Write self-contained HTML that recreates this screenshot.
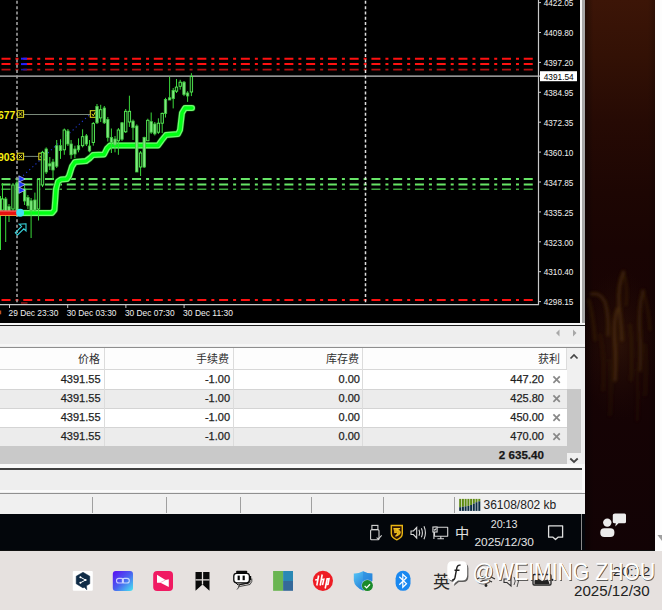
<!DOCTYPE html>
<html lang="zh-CN"><head><meta charset="utf-8">
<style>
*{margin:0;padding:0;box-sizing:border-box}
html,body{width:662px;height:610px;overflow:hidden;background:#e6e1df;font-family:"Liberation Sans",sans-serif}
.a{position:absolute}
#chart{left:0;top:0;width:580px;height:323px;background:#000}
#wall{left:585px;top:0;width:70px;height:551px;background:linear-gradient(#2e1007 0%,#260b06 40%,#1a0605 70%,#120305 100%)}
#rstrip{left:655px;top:0;width:7px;height:551px;background:#fdfdfd}
#panel{left:0;top:323px;width:585px;height:191px;background:#eeeeee}
.hd{position:absolute;top:349px;height:21px;font-size:11px;line-height:21px;color:#303030;text-align:right}
.tx{position:absolute;font-size:11px;line-height:19px;color:#1e1e1e;-webkit-text-stroke:0.25px #1e1e1e;text-align:right;white-space:nowrap}
.x{position:absolute;left:551px;width:11px;font-size:13px;line-height:19px;color:#8a8a8a;text-align:center}
#tbar{left:0;top:514px;width:585px;height:37px;background:#03060b}
#bottom{left:0;top:551px;width:662px;height:59px;background:#e6e1df}
.sep{position:absolute;width:1px;background:#a0a0a0}
</style></head><body>
<div id="chart" class="a">
<svg width="580" height="323" style="position:absolute;left:0;top:0" font-family="Liberation Sans, sans-serif">
<g stroke-dasharray="9 5 3 4.76" fill="none">
<line x1="1.5" y1="58.7" x2="534" y2="58.7" stroke="#ff1010" stroke-width="2"/>
<line x1="1.5" y1="64.1" x2="534" y2="64.1" stroke="#ff1010" stroke-width="2"/>
<line x1="1.5" y1="69.6" x2="534" y2="69.6" stroke="#b01010" stroke-width="1.6"/>
<line x1="1.5" y1="179.1" x2="534" y2="179.1" stroke="#66e466" stroke-width="2"/>
<line x1="1.5" y1="184.6" x2="534" y2="184.6" stroke="#66e466" stroke-width="2"/>
<line x1="1.5" y1="189.3" x2="534" y2="189.3" stroke="#40a840" stroke-width="1.5"/>
<line x1="1.5" y1="300" x2="534" y2="300" stroke="#ff1010" stroke-width="2"/>
</g>
<rect x="21" y="57.7" width="6" height="2" fill="#2020ff"/>
<rect x="21" y="63.1" width="6" height="2" fill="#2020ff"/>
<rect x="21" y="68.8" width="6" height="1.6" fill="#1a1aa0"/>
<line x1="0" y1="76.2" x2="538" y2="76.2" stroke="#c4c4c4" stroke-width="1.2"/>
<g stroke-dasharray="3 2.33" fill="none">
<line x1="17" y1="0.8" x2="17" y2="304" stroke="#a0a0a0" stroke-width="1.6"/>
<line x1="365.5" y1="0.8" x2="365.5" y2="304" stroke="#e0e0e0" stroke-width="1.5"/>
</g>
<!-- yellow labels -->
<line x1="24" y1="114.5" x2="90" y2="114.5" stroke="#7a8a7a" stroke-width="1"/>
<line x1="24" y1="156.4" x2="38.5" y2="156.4" stroke="#7a8a7a" stroke-width="1"/>
<text x="-2" y="118.6" font-size="10.4" font-weight="bold" fill="#f8f010">677</text>
<text x="-2" y="160.6" font-size="10.4" font-weight="bold" fill="#f8f010">903</text>
<g fill="none" stroke="#e8e020" stroke-width="1">
<rect x="17.3" y="110.7" width="6.3" height="6.6"/>
<rect x="17.3" y="153.2" width="6.3" height="6.6"/>
<rect x="90.3" y="110.7" width="6.3" height="6.6"/>
<rect x="38.8" y="153.2" width="6.3" height="6.6"/>
<path d="M18.8 112.2 L22.1 115.8 M22.1 112.2 L18.8 115.8"/>
<path d="M18.8 154.7 L22.1 158.3 M22.1 154.7 L18.8 158.3"/>
<path d="M91.8 113.8 L93.3 115.8 L95.4 112"/>
<path d="M40.3 156.3 L41.8 158.3 L43.9 154.5"/>
</g>
<path d="M20 178.5 L91 113.5" stroke="#2038d0" stroke-width="1.1" stroke-dasharray="1.2 3" fill="none"/>
<!-- supertrend -->
<path d="M20,213 L52,213 L54.5,210 L56,189 L58,181.5 L61,179.5 L67,179 L69,176 L72,166.5 L75,162 L86,161 L90,158 L93,155 L104,154.5 L107,148.5 L110,145.5 L158,145.5 L162,140 L166,135 L178,134 L180,130 L182,113 L185,108 L192,108" fill="none" stroke="#0c6a0c" stroke-width="7.2" stroke-linejoin="round" stroke-linecap="round" opacity="0.8"/>
<path d="M20,213 L52,213 L54.5,210 L56,189 L58,181.5 L61,179.5 L67,179 L69,176 L72,166.5 L75,162 L86,161 L90,158 L93,155 L104,154.5 L107,148.5 L110,145.5 L158,145.5 L162,140 L166,135 L178,134 L180,130 L182,113 L185,108 L192,108" fill="none" stroke="#72f872" stroke-width="6" stroke-linejoin="round" stroke-linecap="round"/>
<path d="M20,213 L52,213 L54.5,210 L56,189 L58,181.5 L61,179.5 L67,179 L69,176 L72,166.5 L75,162 L86,161 L90,158 L93,155 L104,154.5 L107,148.5 L110,145.5 L158,145.5 L162,140 L166,135 L178,134 L180,130 L182,113 L185,108 L192,108" fill="none" stroke="#00ff14" stroke-width="3.4" stroke-linejoin="round" stroke-linecap="round"/>
<line x1="0.5" y1="196" x2="0.5" y2="250" stroke="#3ad83a" stroke-width="1"/>
<rect x="-0.7" y="199" width="2.4" height="13" fill="#80e880" stroke="#40c840" stroke-width="0.8"/>
<line x1="2.5" y1="183" x2="2.5" y2="212" stroke="#3ad83a" stroke-width="1"/>
<rect x="1.3" y="199" width="2.4" height="11" fill="#041a04" stroke="#58f058" stroke-width="0.9"/>
<line x1="5.7" y1="197" x2="5.7" y2="242" stroke="#3ad83a" stroke-width="1"/>
<rect x="4.5" y="199" width="2.4" height="13" fill="#80e880" stroke="#40c840" stroke-width="0.8"/>
<line x1="9" y1="204" x2="9" y2="222" stroke="#3ad83a" stroke-width="1"/>
<rect x="7.8" y="206.6" width="2.4" height="5.400000000000006" fill="#80e880" stroke="#40c840" stroke-width="0.8"/>
<line x1="13" y1="183" x2="13" y2="211" stroke="#3ad83a" stroke-width="1"/>
<rect x="11.8" y="185" width="2.4" height="24" fill="#041a04" stroke="#58f058" stroke-width="0.9"/>
<line x1="17" y1="180" x2="17" y2="215" stroke="#3ad83a" stroke-width="1"/>
<rect x="15.8" y="183" width="2.4" height="29" fill="#80e880" stroke="#40c840" stroke-width="0.8"/>
<line x1="24.6" y1="186" x2="24.6" y2="205" stroke="#3ad83a" stroke-width="1"/>
<rect x="23.400000000000002" y="189" width="2.4" height="12" fill="#80e880" stroke="#40c840" stroke-width="0.8"/>
<line x1="27.9" y1="195" x2="27.9" y2="209" stroke="#3ad83a" stroke-width="1"/>
<rect x="26.7" y="197.5" width="2.4" height="8.199999999999989" fill="#80e880" stroke="#40c840" stroke-width="0.8"/>
<line x1="31.1" y1="198" x2="31.1" y2="238" stroke="#3ad83a" stroke-width="1"/>
<rect x="29.900000000000002" y="200.8" width="2.4" height="9.5" fill="#80e880" stroke="#40c840" stroke-width="0.8"/>
<line x1="34.9" y1="192.6" x2="34.9" y2="212" stroke="#3ad83a" stroke-width="1"/>
<rect x="33.699999999999996" y="200" width="2.4" height="10" fill="#80e880" stroke="#40c840" stroke-width="0.8"/>
<line x1="38.5" y1="178" x2="38.5" y2="220.5" stroke="#3ad83a" stroke-width="1"/>
<rect x="37.3" y="179.5" width="2.4" height="29.5" fill="#041a04" stroke="#58f058" stroke-width="0.9"/>
<line x1="42.5" y1="150.8" x2="42.5" y2="187" stroke="#3ad83a" stroke-width="1"/>
<rect x="41.3" y="152.3" width="2.4" height="32.69999999999999" fill="#041a04" stroke="#58f058" stroke-width="0.9"/>
<line x1="46.2" y1="147.4" x2="46.2" y2="174" stroke="#3ad83a" stroke-width="1"/>
<rect x="45.0" y="149" width="2.4" height="23" fill="#80e880" stroke="#40c840" stroke-width="0.8"/>
<line x1="49.8" y1="157" x2="49.8" y2="170" stroke="#3ad83a" stroke-width="1"/>
<rect x="48.599999999999994" y="163.8" width="2.4" height="2.1999999999999886" fill="#80e880" stroke="#40c840" stroke-width="0.8"/>
<line x1="53" y1="158.9" x2="53" y2="180" stroke="#3ad83a" stroke-width="1"/>
<rect x="51.8" y="162" width="2.4" height="8" fill="#80e880" stroke="#40c840" stroke-width="0.8"/>
<line x1="56.7" y1="140" x2="56.7" y2="168" stroke="#3ad83a" stroke-width="1"/>
<rect x="55.5" y="145.7" width="2.4" height="20.5" fill="#80e880" stroke="#40c840" stroke-width="0.8"/>
<line x1="60.5" y1="139.2" x2="60.5" y2="158.9" stroke="#3ad83a" stroke-width="1"/>
<rect x="59.3" y="145.7" width="2.4" height="4.900000000000006" fill="#80e880" stroke="#40c840" stroke-width="0.8"/>
<line x1="64.3" y1="128.5" x2="64.3" y2="154.8" stroke="#3ad83a" stroke-width="1"/>
<rect x="63.099999999999994" y="130" width="2.4" height="19.80000000000001" fill="#041a04" stroke="#58f058" stroke-width="0.9"/>
<line x1="67.9" y1="129" x2="67.9" y2="146" stroke="#3ad83a" stroke-width="1"/>
<rect x="66.7" y="131" width="2.4" height="13" fill="#80e880" stroke="#40c840" stroke-width="0.8"/>
<line x1="71.1" y1="140" x2="71.1" y2="158.9" stroke="#3ad83a" stroke-width="1"/>
<rect x="69.89999999999999" y="144" width="2.4" height="10.800000000000011" fill="#80e880" stroke="#40c840" stroke-width="0.8"/>
<line x1="74.9" y1="145.7" x2="74.9" y2="158" stroke="#3ad83a" stroke-width="1"/>
<rect x="73.7" y="149" width="2.4" height="5" fill="#80e880" stroke="#40c840" stroke-width="0.8"/>
<line x1="78.5" y1="138.4" x2="78.5" y2="152.3" stroke="#3ad83a" stroke-width="1"/>
<rect x="77.3" y="145.7" width="2.4" height="4.100000000000023" fill="#80e880" stroke="#40c840" stroke-width="0.8"/>
<line x1="82.6" y1="129.3" x2="82.6" y2="147.4" stroke="#3ad83a" stroke-width="1"/>
<rect x="81.39999999999999" y="136.7" width="2.4" height="9.0" fill="#041a04" stroke="#58f058" stroke-width="0.9"/>
<line x1="86.4" y1="134" x2="86.4" y2="146" stroke="#3ad83a" stroke-width="1"/>
<rect x="85.2" y="135.9" width="2.4" height="8.099999999999994" fill="#80e880" stroke="#40c840" stroke-width="0.8"/>
<line x1="89.5" y1="140" x2="89.5" y2="152.3" stroke="#3ad83a" stroke-width="1"/>
<rect x="88.3" y="146" width="2.4" height="5" fill="#80e880" stroke="#40c840" stroke-width="0.8"/>
<line x1="93.3" y1="122" x2="93.3" y2="145.7" stroke="#3ad83a" stroke-width="1"/>
<rect x="92.1" y="123.6" width="2.4" height="18.900000000000006" fill="#041a04" stroke="#58f058" stroke-width="0.9"/>
<line x1="97" y1="104" x2="97" y2="124" stroke="#3ad83a" stroke-width="1"/>
<rect x="95.8" y="106.4" width="2.4" height="16.39999999999999" fill="#80e880" stroke="#40c840" stroke-width="0.8"/>
<line x1="100.7" y1="104.8" x2="100.7" y2="122" stroke="#3ad83a" stroke-width="1"/>
<rect x="99.5" y="109.7" width="2.4" height="8.200000000000003" fill="#041a04" stroke="#58f058" stroke-width="0.9"/>
<line x1="104.3" y1="106" x2="104.3" y2="124" stroke="#3ad83a" stroke-width="1"/>
<rect x="103.1" y="108" width="2.4" height="14.799999999999997" fill="#80e880" stroke="#40c840" stroke-width="0.8"/>
<line x1="107.8" y1="117" x2="107.8" y2="141.6" stroke="#3ad83a" stroke-width="1"/>
<rect x="106.6" y="119.5" width="2.4" height="18.0" fill="#80e880" stroke="#40c840" stroke-width="0.8"/>
<line x1="111.4" y1="128.5" x2="111.4" y2="153" stroke="#3ad83a" stroke-width="1"/>
<rect x="110.2" y="137.5" width="2.4" height="5.0" fill="#80e880" stroke="#40c840" stroke-width="0.8"/>
<line x1="115" y1="136" x2="115" y2="152.3" stroke="#3ad83a" stroke-width="1"/>
<rect x="113.8" y="139" width="2.4" height="6" fill="#80e880" stroke="#40c840" stroke-width="0.8"/>
<line x1="118.4" y1="128" x2="118.4" y2="154.8" stroke="#3ad83a" stroke-width="1"/>
<rect x="117.2" y="130" width="2.4" height="10.800000000000011" fill="#041a04" stroke="#58f058" stroke-width="0.9"/>
<line x1="122" y1="122" x2="122" y2="141" stroke="#3ad83a" stroke-width="1"/>
<rect x="120.8" y="122.8" width="2.4" height="16.39999999999999" fill="#80e880" stroke="#40c840" stroke-width="0.8"/>
<line x1="125.7" y1="109" x2="125.7" y2="133" stroke="#3ad83a" stroke-width="1"/>
<rect x="124.5" y="111.3" width="2.4" height="20.500000000000014" fill="#041a04" stroke="#58f058" stroke-width="0.9"/>
<line x1="129.4" y1="95.7" x2="129.4" y2="126.9" stroke="#3ad83a" stroke-width="1"/>
<rect x="128.20000000000002" y="111.3" width="2.4" height="10.700000000000003" fill="#041a04" stroke="#58f058" stroke-width="0.9"/>
<line x1="133" y1="119.5" x2="133" y2="140" stroke="#3ad83a" stroke-width="1"/>
<rect x="131.8" y="121.1" width="2.4" height="6.6000000000000085" fill="#80e880" stroke="#40c840" stroke-width="0.8"/>
<line x1="136.8" y1="124.4" x2="136.8" y2="172" stroke="#3ad83a" stroke-width="1"/>
<rect x="135.60000000000002" y="126" width="2.4" height="46" fill="#80e880" stroke="#40c840" stroke-width="0.8"/>
<line x1="140.6" y1="151" x2="140.6" y2="176" stroke="#3ad83a" stroke-width="1"/>
<rect x="139.4" y="153" width="2.4" height="14" fill="#041a04" stroke="#58f058" stroke-width="0.9"/>
<line x1="144.2" y1="136.7" x2="144.2" y2="168" stroke="#3ad83a" stroke-width="1"/>
<rect x="143.0" y="137.5" width="2.4" height="29.5" fill="#80e880" stroke="#40c840" stroke-width="0.8"/>
<line x1="147.8" y1="118.7" x2="147.8" y2="141" stroke="#3ad83a" stroke-width="1"/>
<rect x="146.60000000000002" y="120.3" width="2.4" height="20.500000000000014" fill="#041a04" stroke="#58f058" stroke-width="0.9"/>
<line x1="151.2" y1="112.5" x2="151.2" y2="133.9" stroke="#3ad83a" stroke-width="1"/>
<rect x="150.0" y="121.6" width="2.4" height="10.599999999999994" fill="#80e880" stroke="#40c840" stroke-width="0.8"/>
<line x1="154.8" y1="122" x2="154.8" y2="135.5" stroke="#3ad83a" stroke-width="1"/>
<rect x="153.60000000000002" y="124" width="2.4" height="9.900000000000006" fill="#80e880" stroke="#40c840" stroke-width="0.8"/>
<line x1="158.4" y1="118.3" x2="158.4" y2="133.9" stroke="#3ad83a" stroke-width="1"/>
<rect x="157.20000000000002" y="123.2" width="2.4" height="8.999999999999986" fill="#041a04" stroke="#58f058" stroke-width="0.9"/>
<line x1="162.2" y1="112.5" x2="162.2" y2="133" stroke="#3ad83a" stroke-width="1"/>
<rect x="161.0" y="113.4" width="2.4" height="9.799999999999997" fill="#041a04" stroke="#58f058" stroke-width="0.9"/>
<line x1="165.5" y1="97.8" x2="165.5" y2="117.5" stroke="#3ad83a" stroke-width="1"/>
<rect x="164.3" y="99.4" width="2.4" height="14.0" fill="#80e880" stroke="#40c840" stroke-width="0.8"/>
<line x1="169.6" y1="76.5" x2="169.6" y2="100" stroke="#3ad83a" stroke-width="1"/>
<rect x="168.4" y="97.8" width="2.4" height="2.200000000000003" fill="#80e880" stroke="#40c840" stroke-width="0.8"/>
<line x1="173.2" y1="88" x2="173.2" y2="108.4" stroke="#3ad83a" stroke-width="1"/>
<rect x="172.0" y="90.4" width="2.4" height="8.199999999999989" fill="#80e880" stroke="#40c840" stroke-width="0.8"/>
<line x1="176.5" y1="79" x2="176.5" y2="93" stroke="#3ad83a" stroke-width="1"/>
<rect x="175.3" y="87.1" width="2.4" height="4.1000000000000085" fill="#041a04" stroke="#58f058" stroke-width="0.9"/>
<line x1="180.2" y1="79.8" x2="180.2" y2="89.6" stroke="#3ad83a" stroke-width="1"/>
<rect x="179.0" y="82.2" width="2.4" height="4.099999999999994" fill="#041a04" stroke="#58f058" stroke-width="0.9"/>
<line x1="184" y1="81" x2="184" y2="96.1" stroke="#3ad83a" stroke-width="1"/>
<rect x="182.8" y="82.2" width="2.4" height="12.299999999999997" fill="#80e880" stroke="#40c840" stroke-width="0.8"/>
<line x1="187.6" y1="91.2" x2="187.6" y2="101.9" stroke="#3ad83a" stroke-width="1"/>
<rect x="186.4" y="93" width="2.4" height="3" fill="#80e880" stroke="#40c840" stroke-width="0.8"/>
<line x1="191.4" y1="73.2" x2="191.4" y2="96.1" stroke="#3ad83a" stroke-width="1"/>
<rect x="190.20000000000002" y="76.5" width="2.4" height="15.5" fill="#041a04" stroke="#58f058" stroke-width="0.9"/>

<rect x="0" y="210.5" width="18" height="5.5" fill="#e81010"/>
<line x1="0" y1="211" x2="18" y2="211" stroke="#ff9090" stroke-width="0.8"/>
<line x1="0" y1="215.5" x2="18" y2="215.5" stroke="#ffb040" stroke-width="0.8"/>
<circle cx="20.1" cy="212.7" r="4" fill="#40e0f0"/>
<!-- blue arrows -->
<g fill="#1830ff" stroke="#e8ecff" stroke-width="0.6" stroke-linejoin="round">
<path d="M18.8 175.8 L25.2 179 L18.8 182.2 Z"/>
<path d="M18.8 181.4 L25.2 184.6 L18.8 187.8 Z"/>
<path d="M18.8 187 L25.2 190.2 L18.8 193.4 Z"/>
</g>
<path d="M26 223.8 L26 231 L23.8 228.8 L17.5 235 L15.3 232.8 L21.6 226.5 L19.2 224.2 Z" fill="none" stroke="#38d4dc" stroke-width="1.1" stroke-linejoin="miter"/>
<!-- axes -->
<rect x="0" y="310.5" width="1.2" height="3.8" fill="#c05020"/>
<rect x="21" y="302.3" width="6.5" height="1.3" fill="#a01818"/>
<line x1="538.5" y1="0" x2="538.5" y2="305" stroke="#c8c8c8" stroke-width="1.2"/>
<line x1="0" y1="304.7" x2="539" y2="304.7" stroke="#c8c8c8" stroke-width="1.3"/>
<line x1="538" y1="2.6" x2="541" y2="2.6" stroke="#c8c8c8" stroke-width="1"/>
<text x="543.7" y="6.3" font-size="8.8" textLength="29.7" lengthAdjust="spacingAndGlyphs" fill="#f0f0f0">4422.05</text>
<line x1="538" y1="32.5" x2="541" y2="32.5" stroke="#c8c8c8" stroke-width="1"/>
<text x="543.7" y="36.2" font-size="8.8" textLength="29.7" lengthAdjust="spacingAndGlyphs" fill="#f0f0f0">4409.80</text>
<line x1="538" y1="62.4" x2="541" y2="62.4" stroke="#c8c8c8" stroke-width="1"/>
<text x="543.7" y="66.1" font-size="8.8" textLength="29.7" lengthAdjust="spacingAndGlyphs" fill="#f0f0f0">4397.20</text>
<line x1="538" y1="92.3" x2="541" y2="92.3" stroke="#c8c8c8" stroke-width="1"/>
<text x="543.7" y="96.0" font-size="8.8" textLength="29.7" lengthAdjust="spacingAndGlyphs" fill="#f0f0f0">4384.95</text>
<line x1="538" y1="122.2" x2="541" y2="122.2" stroke="#c8c8c8" stroke-width="1"/>
<text x="543.7" y="125.9" font-size="8.8" textLength="29.7" lengthAdjust="spacingAndGlyphs" fill="#f0f0f0">4372.35</text>
<line x1="538" y1="152.1" x2="541" y2="152.1" stroke="#c8c8c8" stroke-width="1"/>
<text x="543.7" y="155.8" font-size="8.8" textLength="29.7" lengthAdjust="spacingAndGlyphs" fill="#f0f0f0">4360.10</text>
<line x1="538" y1="182.0" x2="541" y2="182.0" stroke="#c8c8c8" stroke-width="1"/>
<text x="543.7" y="185.7" font-size="8.8" textLength="29.7" lengthAdjust="spacingAndGlyphs" fill="#f0f0f0">4347.85</text>
<line x1="538" y1="211.9" x2="541" y2="211.9" stroke="#c8c8c8" stroke-width="1"/>
<text x="543.7" y="215.6" font-size="8.8" textLength="29.7" lengthAdjust="spacingAndGlyphs" fill="#f0f0f0">4335.25</text>
<line x1="538" y1="241.8" x2="541" y2="241.8" stroke="#c8c8c8" stroke-width="1"/>
<text x="543.7" y="245.5" font-size="8.8" textLength="29.7" lengthAdjust="spacingAndGlyphs" fill="#f0f0f0">4323.00</text>
<line x1="538" y1="271.7" x2="541" y2="271.7" stroke="#c8c8c8" stroke-width="1"/>
<text x="543.7" y="275.4" font-size="8.8" textLength="29.7" lengthAdjust="spacingAndGlyphs" fill="#f0f0f0">4310.40</text>
<line x1="538" y1="301.6" x2="541" y2="301.6" stroke="#c8c8c8" stroke-width="1"/>
<text x="543.7" y="305.3" font-size="8.8" textLength="29.7" lengthAdjust="spacingAndGlyphs" fill="#f0f0f0">4298.15</text>
<line x1="9.5" y1="305" x2="9.5" y2="308" stroke="#c8c8c8" stroke-width="1"/>
<text x="8.5" y="316.2" font-size="8.8" textLength="49.8" lengthAdjust="spacingAndGlyphs" fill="#f0f0f0">29 Dec 23:30</text>
<line x1="67.7" y1="305" x2="67.7" y2="308" stroke="#c8c8c8" stroke-width="1"/>
<text x="66.7" y="316.2" font-size="8.8" textLength="49.8" lengthAdjust="spacingAndGlyphs" fill="#f0f0f0">30 Dec 03:30</text>
<line x1="125.9" y1="305" x2="125.9" y2="308" stroke="#c8c8c8" stroke-width="1"/>
<text x="124.9" y="316.2" font-size="8.8" textLength="49.8" lengthAdjust="spacingAndGlyphs" fill="#f0f0f0">30 Dec 07:30</text>
<line x1="184.1" y1="305" x2="184.1" y2="308" stroke="#c8c8c8" stroke-width="1"/>
<text x="183.1" y="316.2" font-size="8.8" textLength="49.8" lengthAdjust="spacingAndGlyphs" fill="#f0f0f0">30 Dec 11:30</text>
<rect x="540" y="71.2" width="37" height="10" fill="#ffffff"/>
<line x1="538" y1="76.2" x2="540" y2="76.2" stroke="#c4c4c4" stroke-width="1.2"/>
<text x="543.7" y="79.6" font-size="8.8" textLength="30" lengthAdjust="spacingAndGlyphs" fill="#000">4391.54</text>
</svg>
</div>
<div id="wall" class="a"></div>
<svg class="a" style="left:585px;top:0" width="70" height="551">
<defs>
<filter id="bl" x="-50%" y="-50%" width="200%" height="200%"><feGaussianBlur stdDeviation="2.5"/></filter>
<filter id="bl2" x="-50%" y="-50%" width="200%" height="200%"><feGaussianBlur stdDeviation="1.8"/></filter>
<linearGradient id="wg" x1="0" y1="0" x2="0" y2="1">
<stop offset="0" stop-color="#3c1507"/><stop offset="0.1" stop-color="#331105"/><stop offset="0.22" stop-color="#260a04"/><stop offset="0.35" stop-color="#1d0603"/><stop offset="0.45" stop-color="#190403"/><stop offset="0.7" stop-color="#160304"/><stop offset="1" stop-color="#120305"/>
</linearGradient>
<linearGradient id="wl" x1="0" y1="0" x2="1" y2="0"><stop offset="0" stop-color="#000" stop-opacity="0.35"/><stop offset="0.12" stop-color="#000" stop-opacity="0"/><stop offset="0.9" stop-color="#000" stop-opacity="0"/><stop offset="1" stop-color="#000" stop-opacity="0.2"/></linearGradient>
<radialGradient id="wh" cx="0.5" cy="0.5" r="0.5"><stop offset="0" stop-color="#5a3210" stop-opacity="0.55"/><stop offset="1" stop-color="#3a1a08" stop-opacity="0"/></radialGradient>
</defs>
<rect width="70" height="551" fill="url(#wg)"/><rect width="70" height="551" fill="url(#wl)"/>
<ellipse cx="35" cy="345" rx="42" ry="75" fill="url(#wh)" opacity="0.5"/>
<g filter="url(#bl2)" fill="none" stroke-linecap="round" opacity="0.7">
<path d="M38.5 272 Q33 285 34 304 Q36 320 37 340" stroke="#5a3a0e" stroke-width="3.5" opacity="0.75"/>
<path d="M38.5 273 Q43 285 41 305" stroke="#4a2e0a" stroke-width="2.5" opacity="0.6"/>
<path d="M58 291 Q53 310 55 335 Q56 350 55 370" stroke="#50330c" stroke-width="3.5" opacity="0.7"/>
<path d="M58.5 292 Q64 310 65 330" stroke="#4a2e0a" stroke-width="2.2" opacity="0.55"/>
<path d="M6.5 294 Q15 292 20 302 Q24 315 23 335" stroke="#5a3a0e" stroke-width="3" opacity="0.7"/>
<path d="M4 300 Q8 315 10 340" stroke="#4a2e0a" stroke-width="3" opacity="0.55"/>
<path d="M32.5 309 Q28 320 30 345 Q31 360 30 380" stroke="#6a4510" stroke-width="3.5" opacity="0.6"/>
<path d="M45 325 Q48 345 46 380" stroke="#3e250a" stroke-width="3" opacity="0.55"/>
<path d="M15 335 Q20 355 18 390" stroke="#3e250a" stroke-width="3" opacity="0.5"/>
<path d="M60 345 Q62 365 60 395" stroke="#3a2208" stroke-width="3" opacity="0.45"/>
<path d="M25 360 Q27 385 25 415" stroke="#3a2208" stroke-width="3" opacity="0.4"/>
<path d="M52 370 Q54 395 52 420" stroke="#3a2208" stroke-width="3" opacity="0.35"/>
</g>
<g fill="#ececec">
<circle cx="22.3" cy="522.6" r="4.2"/>
<rect x="15.3" y="528.3" width="14.1" height="8.8" rx="4"/>
<path d="M30 513.5 L39.5 513.5 Q41 513.5 41 515 L41 521.8 Q41 523.3 39.5 523.3 L33.5 523.3 L30.3 526.6 L30.8 523.3 Q27.8 523.3 27.8 521.8 L27.8 515 Q27.8 513.5 30 513.5 Z"/>
</g>
</svg>
<div id="rstrip" class="a"></div>
<div class="a" style="left:580px;top:0;width:2px;height:325px;background:#f4f4f4"></div>
<div class="a" style="left:582px;top:0;width:3px;height:325px;background:#a8a8a8"></div>
<div id="panel" class="a"></div>
<div class="a" style="left:0;top:323px;width:585px;height:2px;background:#f8f8f8"></div>
<div class="a" style="left:0;top:325px;width:585px;height:1px;background:#202020"></div>
<div class="a" style="left:0;top:344px;width:585px;height:2px;background:#f6f6f6"></div>
<div class="a" style="left:0;top:346.6px;width:585px;height:1.4px;background:#8e8e8e"></div>
<!-- scroll arrows h -->
<svg class="a" style="left:553px;top:328px" width="28" height="10"><path d="M6.5 1.5 L3 5 L6.5 8.5Z" fill="#a8a8a8"/><path d="M20 1.5 L23.5 5 L20 8.5Z" fill="#a8a8a8"/></svg>
<!-- table -->
<div class="a" style="left:0;top:348px;width:567px;height:21px;background:#fdfdfd"></div>
<div class="a" style="left:0;top:369px;width:567px;height:1px;background:#d8d8d8"></div>
<div class="a" style="left:0;top:370px;width:567px;height:19px;background:#ffffff"></div>
<div class="a" style="left:0;top:389px;width:567px;height:19px;background:#ececec"></div>
<div class="a" style="left:0;top:408px;width:567px;height:19px;background:#ffffff"></div>
<div class="a" style="left:0;top:427px;width:567px;height:19px;background:#ececec"></div>
<div class="a" style="left:0;top:389px;width:567px;height:1px;background:#d4d4d4"></div>
<div class="a" style="left:0;top:408px;width:567px;height:1px;background:#d4d4d4"></div>
<div class="a" style="left:0;top:427px;width:567px;height:1px;background:#d4d4d4"></div>
<div class="a" style="left:0;top:446px;width:567px;height:18px;background:#c9c9c9"></div>
<div class="a" style="left:104px;top:348px;width:1px;height:98px;background:#dcdcdc"></div>
<div class="a" style="left:233px;top:348px;width:1px;height:98px;background:#dcdcdc"></div>
<div class="a" style="left:362px;top:348px;width:1px;height:98px;background:#dcdcdc"></div>
<div class="a" style="left:566px;top:348px;width:1px;height:21px;background:#dcdcdc"></div>
<div class="hd" style="left:40px;width:60px">价格</div>
<div class="hd" style="left:160px;width:69px">手续费</div>
<div class="hd" style="left:290px;width:69px">库存费</div>
<div class="hd" style="left:500px;width:60px">获利</div>
<div class="tx" style="left:20px;width:80.5px;top:370px">4391.55</div>
<div class="tx" style="left:20px;width:80.5px;top:389px">4391.55</div>
<div class="tx" style="left:20px;width:80.5px;top:408px">4391.55</div>
<div class="tx" style="left:20px;width:80.5px;top:427px">4391.55</div>
<div class="tx" style="left:160px;width:70px;top:370px">-1.00</div>
<div class="tx" style="left:160px;width:70px;top:389px">-1.00</div>
<div class="tx" style="left:160px;width:70px;top:408px">-1.00</div>
<div class="tx" style="left:160px;width:70px;top:427px">-1.00</div>
<div class="tx" style="left:290px;width:70px;top:370px">0.00</div>
<div class="tx" style="left:290px;width:70px;top:389px">0.00</div>
<div class="tx" style="left:290px;width:70px;top:408px">0.00</div>
<div class="tx" style="left:290px;width:70px;top:427px">0.00</div>
<div class="tx" style="left:480px;width:64px;top:370px">447.20</div>
<div class="tx" style="left:480px;width:64px;top:389px">425.80</div>
<div class="tx" style="left:480px;width:64px;top:408px">450.00</div>
<div class="tx" style="left:480px;width:64px;top:427px">470.00</div>
<div class="tx" style="left:470px;width:74px;top:446px;line-height:18px;font-weight:bold;font-size:11.6px;color:#151515">2 635.40</div>
<svg class="a" style="left:551px;top:374px" width="12" height="12"><path d="M2.4 2.4 L8.8 8.8 M8.8 2.4 L2.4 8.8" stroke="#888888" stroke-width="1.7"/></svg>
<svg class="a" style="left:551px;top:393px" width="12" height="12"><path d="M2.4 2.4 L8.8 8.8 M8.8 2.4 L2.4 8.8" stroke="#888888" stroke-width="1.7"/></svg>
<svg class="a" style="left:551px;top:412px" width="12" height="12"><path d="M2.4 2.4 L8.8 8.8 M8.8 2.4 L2.4 8.8" stroke="#888888" stroke-width="1.7"/></svg>
<svg class="a" style="left:551px;top:431px" width="12" height="12"><path d="M2.4 2.4 L8.8 8.8 M8.8 2.4 L2.4 8.8" stroke="#888888" stroke-width="1.7"/></svg>
<!-- vscroll -->
<div class="a" style="left:567px;top:348px;width:15px;height:116px;background:#f0f0f0"></div>
<div class="a" style="left:567.3px;top:389px;width:13.7px;height:63.5px;background:#c8c8c8"></div>
<svg class="a" style="left:567px;top:350px" width="15" height="114"><path d="M3.5 8.5 L7 5 L10.5 8.5" fill="none" stroke="#454545" stroke-width="1.7"/><path d="M3.3 108.5 L7 112 L10.7 108.5" fill="none" stroke="#454545" stroke-width="1.8"/></svg>
<div class="a" style="left:0;top:464px;width:585px;height:4px;background:#fafafa"></div>
<div class="a" style="left:0;top:468px;width:581.6px;height:1.5px;background:#404040"></div><div class="a" style="left:581.6px;top:464px;width:3.4px;height:29px;background:#f8f8f8"></div>
<div class="a" style="left:0;top:490px;width:585px;height:2px;background:#fafafa"></div>
<div class="a" style="left:0;top:492.5px;width:585px;height:1px;background:#909090"></div>
<div class="a" style="left:0;top:494px;width:585px;height:20px;background:#f0f0f0"></div>
<div class="sep" style="left:92px;top:497px;height:16px"></div>
<div class="sep" style="left:166px;top:497px;height:16px"></div>
<div class="sep" style="left:240px;top:497px;height:16px"></div>
<div class="sep" style="left:311px;top:497px;height:16px"></div>
<div class="sep" style="left:383px;top:497px;height:16px"></div>
<div class="sep" style="left:454px;top:497px;height:16px"></div>
<svg class="a" style="left:455px;top:495px" width="30" height="18"><rect x="4.2" y="3.9" width="2" height="8.3" fill="#5e8a12"/><rect x="4.2" y="12.2" width="2" height="3.7" fill="#0c2c44"/><rect x="6.9" y="3.9" width="2" height="7.9" fill="#5e8a12"/><rect x="6.9" y="11.8" width="2" height="4.1" fill="#0c2c44"/><rect x="9.6" y="3.9" width="2" height="7.4" fill="#5e8a12"/><rect x="9.6" y="11.3" width="2" height="4.6" fill="#0c2c44"/><rect x="12.4" y="3.9" width="2" height="7.0" fill="#5e8a12"/><rect x="12.4" y="10.9" width="2" height="5.0" fill="#0c2c44"/><rect x="15.1" y="3.9" width="2" height="6.1" fill="#5e8a12"/><rect x="15.1" y="10.0" width="2" height="5.9" fill="#0c2c44"/><rect x="17.8" y="3.9" width="2" height="4.7" fill="#5e8a12"/><rect x="17.8" y="8.6" width="2" height="7.3" fill="#0c2c44"/><rect x="20.5" y="3.9" width="2" height="3.3" fill="#5e8a12"/><rect x="20.5" y="7.2" width="2" height="8.7" fill="#0c2c44"/><rect x="23.3" y="3.9" width="2" height="2.4" fill="#5e8a12"/><rect x="23.3" y="6.3" width="2" height="9.6" fill="#0c2c44"/></svg>
<div class="a" style="left:483.5px;top:497.2px;font-size:12px;line-height:16px;color:#222">36108/802 kb</div>
<div id="tbar" class="a"></div>
<div class="a" style="left:581px;top:514px;width:1px;height:37px;background:#8a8a8a"></div>
<svg class="a" style="left:360px;top:514px" width="225" height="37" font-family="Liberation Sans, sans-serif">
<g fill="none" stroke="#d4d4d4" stroke-width="1.1">
<rect x="11.9" y="11.4" width="6" height="4.2"/>
<rect x="10.6" y="15.8" width="8.4" height="10" rx="1"/>
<path d="M16.6 23.6 L18.3 25 L21.7 21.3"/>
</g>
<path d="M31.3 11.5 L42.3 11.5 L42.3 19.5 Q42.3 23.5 36.8 25.8 Q31.3 23.5 31.3 19.5 Z" stroke="#e8b412" stroke-width="1.4" fill="#2a1206"/>
<path d="M33.5 14.6 L40 14.6 L36 16.2 Q40.3 16.2 40.2 18.5 Q39.6 21.3 35.5 22.2 Q37.8 20.3 37.6 18.6 Q36.4 17.8 34.3 18.8" stroke="#f0c020" stroke-width="1.1" fill="#d8a818"/>
<g fill="none" stroke="#d8d8d8" stroke-width="1.1">
<path d="M51 17 L53.4 17 L56.7 13.5 L56.7 24 L53.4 20.5 L51 20.5 Z"/>
<path d="M59 15.8 Q60.3 18.75 59 21.7"/>
<path d="M61.4 14.2 Q63.4 18.75 61.4 23.3"/>
<path d="M64 12.3 Q66.8 18.75 64 25.2"/>
<rect x="74.5" y="13.3" width="13.2" height="8.9" rx="0.3"/>
<path d="M80.8 22.2 L80.8 24.6 M77.4 24.7 L84 24.7 M73.9 18 L73.9 25"/>
<rect x="72.9" y="13" width="4.2" height="5" fill="#03060b"/>
<path d="M73.8 15.3 L74.8 16.3 L76.4 14.3"/>
</g>
<text x="95" y="23.6" font-size="14.2" fill="#e0e0e0">中</text>
<text x="130.7" y="14.3" font-size="10.3" fill="#e4e4e4" textLength="26.8" lengthAdjust="spacingAndGlyphs">20:13</text>
<text x="114.4" y="31.6" font-size="10.3" fill="#e4e4e4" textLength="59.6" lengthAdjust="spacingAndGlyphs">2025/12/30</text>
<path d="M188.6 11.8 L202.6 11.8 L202.6 23.2 L198 23.2 L195.5 25.5 L193 23.2 L188.6 23.2 Z" fill="none" stroke="#e0e0e0" stroke-width="1.3" stroke-linejoin="round"/>
</svg>
<div id="bottom" class="a"></div>
<div class="a" style="left:0;top:550px;width:655px;height:1.2px;background:#101010"></div>
<svg class="a" style="left:0;top:551px" width="662" height="59" font-family="Liberation Sans, sans-serif">
<defs>
<linearGradient id="lg1" x1="0" y1="0" x2="1" y2="1"><stop offset="0" stop-color="#5a0cf2"/><stop offset="0.5" stop-color="#4a60f0"/><stop offset="1" stop-color="#48e8f0"/></linearGradient>
<linearGradient id="lg2" x1="0" y1="0" x2="1" y2="1"><stop offset="0" stop-color="#58c8f8"/><stop offset="1" stop-color="#1060c8"/></linearGradient>
</defs>
<!-- deepl -->
<rect x="72.8" y="20" width="20" height="19.8" rx="1" fill="#ffffff"/>
<path d="M83 21.3 L89.8 25.2 L89.8 32.8 L86.5 34.7 L86.8 38.8 L84.2 36.2 L83 36.9 L76.2 32.8 L76.2 25.2 Z" fill="#0f2b46" stroke="#0f2b46" stroke-width="0.5" stroke-linejoin="round"/>
<path d="M80.4 26.2 L85.6 29 L80.4 31.8" fill="none" stroke="#ffffff" stroke-width="1"/>
<circle cx="80.4" cy="26.2" r="1" fill="#fff"/><circle cx="80.4" cy="31.8" r="1" fill="#fff"/><circle cx="85.6" cy="29" r="1" fill="#fff"/>
<!-- link -->
<rect x="112.8" y="20" width="20.2" height="20" rx="3" fill="url(#lg1)"/>
<rect x="116.5" y="27.4" width="7" height="4.6" rx="2.3" fill="none" stroke="#c8c8ff" stroke-width="1.1"/>
<rect x="122.3" y="27.4" width="7" height="4.6" rx="2.3" fill="none" stroke="#c8d8ff" stroke-width="1.1"/>
<!-- pink -->
<rect x="153.2" y="20" width="19.8" height="20" rx="4" fill="#f01a62"/>
<path d="M157 23.8 L165.5 29 L168.8 28.3 L168.8 36 L160.5 31.7 L157 31.7 Z" fill="#ffffff"/>
<path d="M160.5 31.5 L165.5 29" stroke="#f6a0c0" stroke-width="0.8"/>
<!-- bookmark -->
<path d="M195.5 21 L209.5 21 L209.5 39.8 L202.5 33.5 L195.5 39.8 Z" fill="#0a0a0a"/>
<path d="M202.5 21 L202.5 33.5 M195.5 28.8 L209.5 28.8" stroke="#e6e1df" stroke-width="1.3"/>
<!-- robot -->
<path d="M237 38.5 L239.5 35.5 L250 33.5 L251.8 30.5 L251.8 27.5 M238.2 36.2 L240 33.6 L249.5 31.8 L250.5 29.5" stroke="#333" stroke-width="0.9" fill="none"/>
<path d="M236 32 L238 34 L248.5 32" stroke="#111" stroke-width="1" fill="none"/>
<rect x="233.8" y="22.3" width="15.6" height="9.6" rx="2.8" fill="#ffffff" stroke="#0a0a0a" stroke-width="1.3"/>
<rect x="236.2" y="19.8" width="11" height="3.2" rx="0.8" fill="#0a0a0a"/>
<rect x="237.6" y="24.6" width="2.2" height="4.6" fill="#0a0a0a"/><rect x="242.6" y="24.6" width="2.2" height="4.6" fill="#0a0a0a"/>
<rect x="249.8" y="25" width="1.4" height="4" fill="#0a0a0a"/>
<!-- squares -->
<rect x="273.1" y="20" width="10" height="19.8" fill="#6ab552"/>
<rect x="283.1" y="20" width="9.9" height="10" fill="#2a88b4"/>
<rect x="283.1" y="30" width="9.9" height="9.8" fill="#35699a"/>
<!-- red circle -->
<circle cx="322.9" cy="29.8" r="10.1" fill="#ee1c24"/>
<g stroke="#ffffff" stroke-width="1.6" fill="none" stroke-linecap="butt">
<path d="M318.6 24.5 L316.8 34.5"/>
<path d="M322.2 23.5 L320.2 34.5 M321.3 28.7 L323.8 28.2 L322.5 34.2"/>
<path d="M327.3 27.2 L325.2 37.5 M326.5 28 L329 27.6 L328 33.2 L325.6 33.6"/>
<path d="M318 28.5 L315.2 29"/>
</g>
<!-- defender -->
<path d="M363 20.3 Q358 22.8 353.8 22.5 L353.8 29.5 Q354.5 36 363 39.5 Q371.5 36 372.3 29.5 L372.3 22.5 Q368 22.8 363 20.3 Z" fill="url(#lg2)"/>
<path d="M363 20.3 L363 39.5 Q371.5 36 372.3 29.5 L372.3 22.5 Q368 22.8 363 20.3 Z" fill="#2a8ae0" opacity="0.6"/>
<circle cx="367.4" cy="34.6" r="6" fill="#f0f0f0" opacity="0.6"/>
<circle cx="367.4" cy="34.6" r="5.5" fill="#1a8a2a"/>
<path d="M364.6 34.9 L366.6 36.9 L370 33.2" stroke="#fff" stroke-width="1.3" fill="none"/>
<!-- bluetooth -->
<rect x="395.6" y="19.8" width="14.9" height="20" rx="7.4" fill="#1a88f0"/>
<path d="M399.3 25.8 L406.5 32.8 L402.8 36.3 L402.8 23.3 L406.5 26.8 L399.3 33.8" stroke="#ffffff" stroke-width="1.2" fill="none"/>
<!-- ime -->
<text x="432.5" y="36.8" font-size="17" fill="#2a2a2a">英</text>
<!-- hidden tray icons -->
<path d="M477 28 Q486 22 495 28 M480 31 Q486 27 492 31" stroke="#303030" stroke-width="1.2" fill="none"/>
<circle cx="486" cy="34.5" r="1.4" fill="#202020"/>
<path d="M504 28 L507 28 L511 24.5 L511 35 L507 31.5 L504 31.5 Z" stroke="#303030" stroke-width="1.1" fill="none"/>
<path d="M514 26 Q516.5 30 514 34 M517 24 Q520 30 517 36" stroke="#505050" stroke-width="1" fill="none"/>
<rect x="533" y="23.5" width="18" height="10.5" rx="1.2" fill="none" stroke="#222" stroke-width="1.3"/>
<path d="M534.5 33 L534.5 29.5 L538 27.5 L542 30 L548 28.5 L549.5 33 Z" fill="#222"/>
<circle cx="552.5" cy="28.8" r="1.1" fill="#222"/>
<!-- clock -->
<text x="612.8" y="24.6" font-size="13.5" fill="#2a2a2a" textLength="37.5" lengthAdjust="spacingAndGlyphs">20:12</text>
<text x="574" y="45" font-size="14.5" fill="#222222" textLength="75.7" lengthAdjust="spacingAndGlyphs">2025/12/30</text>
<!-- watermark -->
<g transform="translate(0.9,1.1)" opacity="0.75">
<path d="M452 10.8 L462 10.8 Q467.5 10.8 467.5 16.5 L467.5 24.5 Q467.5 30 462 30 L458 30 L453 34 L454 30 Q447.5 30 447.5 24.5 L447.5 16.5 Q447.5 10.8 452 10.8 Z" fill="#303030"/>
<text x="472.6" y="29.4" font-size="23.2" fill="#303030" textLength="182.6" lengthAdjust="spacingAndGlyphs">@WEIMING ZHOU</text>
</g>
<path d="M452 10.3 L462 10.3 Q467.2 10.3 467.2 16 L467.2 24 Q467.2 29.5 462 29.5 L458 29.5 L452.5 33.8 L453.6 29.5 Q447.3 29.5 447.3 24 L447.3 16 Q447.3 10.3 452 10.3 Z" fill="#ffffff"/>
<path d="M460.5 14.3 Q457.5 13.5 456.8 17 L455 26.5 Q454.3 29.5 452 29 M454.5 19.2 L459.5 19.2" stroke="#202020" stroke-width="1.4" fill="none"/>
<text x="472.6" y="29.4" font-size="23.2" fill="#ffffff" textLength="182.6" lengthAdjust="spacingAndGlyphs">@WEIMING ZHOU</text>
</svg>
<!-- right strip arrow -->
<svg class="a" style="left:655px;top:533px" width="7" height="10"><path d="M2.5 2 L7 2 L7 8 Z" fill="#a0a0a0"/></svg>
</body></html>
